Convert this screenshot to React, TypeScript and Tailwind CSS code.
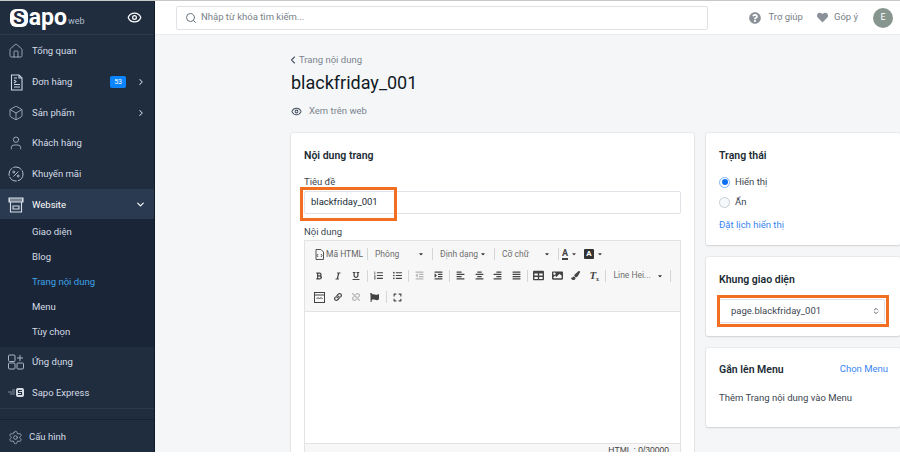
import type { ReactNode } from 'react';
import {
  Box,
  ChevronDown,
  ChevronLeft,
  ChevronRight,
  ChevronsUpDown,
  Eye,
  Home,
  Search,
  Settings,
  User,
} from 'lucide-react';
import {
  FaAlignCenter,
  FaAlignJustify,
  FaAlignLeft,
  FaAlignRight,
  FaBold,
  FaCaretDown,
  FaExpand,
  FaFlag,
  FaHeart,
  FaImage,
  FaIndent,
  FaItalic,
  FaLink,
  FaListOl,
  FaListUl,
  FaOutdent,
  FaPaintBrush,
  FaQuestionCircle,
  FaTable,
  FaUnderline,
  FaUnlink,
} from 'react-icons/fa';

function OrderIcon() {
  return (
    <svg width="15" height="17" viewBox="0 0 15 17" fill="none" stroke="#cbd5e1" strokeWidth="1.1">
      <path d="M2.500 1h7.500l3 3v12h-10.500z" />
      <path d="M10 1v3h3M5 4h3M5 13h6M5 10.500h6M5 6l2 1.500-2 1.500" />
    </svg>
  );
}

function PercentIcon() {
  return (
    <svg width="16" height="16" viewBox="0 0 16 16" fill="none" stroke="#b3bfcc" strokeWidth="1">
      <circle cx="8" cy="8" r="7" strokeDasharray="9 1" />
      <path d="M5.500 10.500l5-5" />
      <circle cx="5.800" cy="6" r="1" />
      <circle cx="10.200" cy="10" r="1" />
    </svg>
  );
}

function WebsiteIcon() {
  return (
    <svg width="16" height="16" viewBox="0 0 16 16" fill="none" stroke="#d7dee6" strokeWidth="1.100">
      <path d="M1 1h14v4H1z" fill="#d7dee6" />
      <path d="M3 1.500v3M5 1.500v3M7 1.500v3M9 1.500v3M11 1.500v3M13 1.500v3" stroke="#27384d" />
      <path d="M2.500 5v10h11V5M5 9h6v3H5z" />
    </svg>
  );
}

function AppsIcon() {
  return (
    <svg width="16" height="16" viewBox="0 0 16 16" fill="none" stroke="#a9b6c4" strokeWidth="1">
      <rect x="0.500" y="1" width="6.500" height="6.500" rx="1" />
      <rect x="0.500" y="9" width="6.500" height="6" rx="1" />
      <rect x="9" y="9" width="6.500" height="6" rx="1" />
      <path d="M12 1v6M9 4h6" />
    </svg>
  );
}

function ExpressIcon() {
  return (
    <svg width="16" height="11" viewBox="0 0 16 11" fill="none">
      <path d="M0 5h7M2 7h5M4 3h3" stroke="#7f8c9b" />
      <rect x="8" y="1" width="8" height="9" rx="2" fill="#d7dee6" />
      <path d="M14 3.500h-3.500v2h3v2H10" stroke="#1f2d3f" strokeWidth="1.100" />
    </svg>
  );
}

function NavItem({
  icon,
  label,
  badge,
  arrow,
  active,
}: {
  icon: ReactNode;
  label: string;
  badge?: string;
  arrow?: 'right' | 'down';
  active?: boolean;
}) {
  return (
    <div className={`flex h-[30.7px] items-center pl-2 pr-[8px] ${active ? 'bg-[#2a3b51] text-white' : 'text-[#d5dce4]'}`}>
      <span className="flex w-[16px] shrink-0 justify-center">{icon}</span>
      <span className="ml-[8px] flex-1 text-[9.500px]">{label}</span>
      {badge && (
        <span className="mr-[10px] rounded-[2px] bg-[#0a84ff] px-[4px] py-px text-[7px] leading-[10px] text-white">{badge}</span>
      )}
      {arrow === 'right' && <ChevronRight size={10} strokeWidth={2.500} className="text-[#cbd5e1]" />}
      {arrow === 'down' && <ChevronDown size={11} strokeWidth={2.500} className="text-white" />}
    </div>
  );
}

function Sidebar() {
  const iconClass = 'text-[#b3bfcc]';
  return (
    <aside className="flex w-[155px] shrink-0 flex-col border-r border-[#101b2a] bg-[#1f2d3f]">
      <div className="flex h-[34px] shrink-0 items-center justify-between border-b border-[#2a3a4d] pl-[10px] pr-[12px]">
        <div className="flex items-end text-white">
          <span className="rounded-[6px] bg-white px-[3px] text-[19px] font-bold leading-[18px] text-[#1f2d3f]">S</span>
          <span className="ml-px text-[23px] font-bold leading-[18px]">apo</span>
          <span className="ml-px text-[9px] leading-[12px] text-[#b3bfcc]">web</span>
        </div>
        <Eye size={15} strokeWidth={2} className="text-white" />
      </div>
      <div className="pt-px">
        <NavItem icon={<Home size={16} strokeWidth={1.200} className={iconClass} />} label="Tổng quan" />
        <NavItem icon={<OrderIcon />} label="Đơn hàng" badge="53" arrow="right" />
        <NavItem icon={<Box size={16} strokeWidth={1.200} className={iconClass} />} label="Sản phẩm" arrow="right" />
        <NavItem icon={<User size={16} strokeWidth={1.200} className={iconClass} />} label="Khách hàng" />
        <NavItem icon={<PercentIcon />} label="Khuyến mãi" />
        <NavItem icon={<WebsiteIcon />} label="Website" arrow="down" active />
      </div>
      <div className="-mt-px flex flex-col bg-[#1a2638] pb-[3px] text-[9.500px] text-[#d5dce4]">
        {['Giao diện', 'Blog', 'Trang nội dung', 'Menu', 'Tùy chọn'].map((item) => (
          <div key={item} className={`flex h-[25px] items-center pl-[32px] ${item === 'Trang nội dung' ? 'text-[#3fa3e8]' : ''}`}>
            {item}
          </div>
        ))}
      </div>
      <NavItem icon={<AppsIcon />} label="Ứng dụng" />
      <NavItem icon={<ExpressIcon />} label="Sapo Express" />
      <div className="mt-auto h-[11px] border-t border-[#2a3a4d]" />
      <div className="flex h-[33px] items-center border-t border-[#17222f] pl-[8px] pt-[3px] text-[9.500px] text-[#d5dce4]">
        <Settings size={15} strokeWidth={1.200} className={iconClass} />
        <span className="ml-[6px]">Cấu hình</span>
      </div>
    </aside>
  );
}

function Header() {
  return (
    <header className="flex h-[34px] shrink-0 items-center border-b border-[#e8ebef] bg-white pl-[21px] pr-[7px] text-[#777f88]">
      <div className="flex h-[24px] w-[532px] items-center rounded-[2px] border border-[#dfe3e8] pl-[8px] text-[9.500px]">
        <Search size={12} strokeWidth={2} className="text-[#666f79]" />
        <span className="ml-[4px]">Nhập từ khóa tìm kiếm...</span>
      </div>
      <div className="ml-auto flex items-center text-[9.500px]">
        <FaQuestionCircle size={12} className="text-[#8a9199]" />
        <span className="ml-[7px]">Trợ giúp</span>
        <FaHeart size={11} className="ml-[14px] text-[#8a9199]" />
        <span className="ml-[6px]">Góp ý</span>
        <span className="ml-[15px] flex size-[20px] items-center justify-center rounded-full bg-[#87958f] text-[9px] text-white">E</span>
      </div>
    </header>
  );
}

function ToolSep() {
  return <span className="mx-[1.500px] h-[12px] w-px shrink-0 bg-[#d5d5d5]" />;
}

function ToolSelect({ label, width }: { label: string; width: string }) {
  return (
    <span className={`flex items-center justify-between pl-[6px] pr-[6px] text-[8.500px] text-[#6f6f6f] ${width}`}>
      {label}
      <FaCaretDown size={6} className="text-[#333]" />
    </span>
  );
}

function Tool({ children, muted }: { children: ReactNode; muted?: boolean }) {
  return (
    <span className={`flex h-[14px] w-[18.500px] items-center justify-center ${muted ? 'text-[#b5b5b5]' : 'text-[#444]'}`}>
      {children}
    </span>
  );
}

function Editor() {
  return (
    <div className="border border-[#e3e3e3]">
      <div className="flex h-[71px] flex-col gap-[7.500px] border-b border-[#e3e3e3] bg-[#f7f7f7] pl-[5px] pt-[6px]">
        <div className="flex h-[14px] items-center">
          <span className="ml-[5px] flex w-[50px] items-center gap-[2px] whitespace-nowrap text-[8.500px] text-[#666]">
            <svg width="9" height="11" viewBox="0 0 9 11" fill="none" stroke="#555">
              <path d="M1 .5h5l2.500 2.500v7.500H1z" />
              <path d="M3 5l-1 1.500 1 1.500M6 5l1 1.500-1 1.500" />
            </svg>
            Mã HTML
          </span>
          <ToolSep />
          <ToolSelect label="Phông" width="w-[61px]" />
          <ToolSep />
          <ToolSelect label="Định dạng" width="w-[58px]" />
          <ToolSep />
          <ToolSelect label="Cỡ chữ" width="w-[60px]" />
          <ToolSep />
          <span className="ml-[2px] flex items-center gap-[3px] text-[#444]">
            <span className="border-b-2 border-[#444] text-[9px] font-bold leading-[10px]">A</span>
            <FaCaretDown size={6} />
            <span className="ml-[4px] flex size-[10px] items-center justify-center rounded-[1px] bg-[#333] text-[8px] font-bold text-white">A</span>
            <FaCaretDown size={6} />
          </span>
        </div>
        <div className="flex h-[14px] items-center">
          <Tool><FaBold size={8} /></Tool>
          <Tool><FaItalic size={8} /></Tool>
          <Tool><FaUnderline size={8} /></Tool>
          <ToolSep />
          <Tool><FaListOl size={9} /></Tool>
          <Tool><FaListUl size={9} /></Tool>
          <ToolSep />
          <Tool muted><FaOutdent size={9} /></Tool>
          <Tool><FaIndent size={9} /></Tool>
          <ToolSep />
          <Tool><FaAlignLeft size={9} /></Tool>
          <Tool><FaAlignCenter size={9} /></Tool>
          <Tool><FaAlignRight size={9} /></Tool>
          <Tool><FaAlignJustify size={9} /></Tool>
          <ToolSep />
          <Tool><FaTable size={11} /></Tool>
          <Tool><FaImage size={11} /></Tool>
          <Tool><FaPaintBrush size={9} /></Tool>
          <Tool>
            <span className="font-['Liberation_Serif',serif] text-[11px] font-bold italic leading-none">
              T<sub className="text-[6px] not-italic">x</sub>
            </span>
          </Tool>
          <ToolSep />
          <ToolSelect label="Line Hei..." width="w-[61px]" />
          <ToolSep />
        </div>
        <div className="flex h-[14px] items-center">
          <Tool>
            <svg width="11" height="11" viewBox="0 0 11 11" fill="none" stroke="#444">
              <rect x=".5" y=".5" width="10" height="10" />
              <path d="M1 3h9M2.500 7l1.500-1.500L5.500 7 7 5.500 8.500 7" />
            </svg>
          </Tool>
          <Tool><FaLink size={8} /></Tool>
          <Tool muted><FaUnlink size={8} /></Tool>
          <Tool><FaFlag size={9} /></Tool>
          <ToolSep />
          <Tool><FaExpand size={9} /></Tool>
        </div>
      </div>
      <div className="h-[131px] bg-white" />
      <div className="flex h-[20px] justify-end border-t border-[#e3e3e3] bg-[#f7f7f7] pr-[11px] font-['Liberation_Sans',sans-serif] text-[8.500px] leading-[13px] text-[#444]">
        HTML : 0/30000
      </div>
    </div>
  );
}

function Card({ className, children }: { className: string; children: ReactNode }) {
  return <section className={`rounded-[2px] bg-white shadow-[0_0_0_1px_rgba(63,63,68,0.05),0_1px_2px_rgba(63,63,68,0.15)] ${className}`}>{children}</section>;
}

function Content() {
  return (
    <div className="flex min-h-0 flex-1 flex-col overflow-hidden bg-[#f4f6f8] pl-[136px] text-[#3c4650]">
      <div className="mt-[19px] flex h-[12px] items-center text-[9.500px] text-[#7b848d]">
        <ChevronLeft size={12} strokeWidth={2.200} className="-ml-[4px] text-[#4b5560]" />
        <span>Trang nội dung</span>
      </div>
      <h1 className="mt-[3px] h-[28px] text-[18px] font-normal leading-[28px] text-[#111a24]">blackfriday_001</h1>
      <div className="mt-[7px] flex h-[14px] items-center text-[9.500px] text-[#7b848d]">
        <Eye size={11} strokeWidth={2.200} className="text-[#4b5560]" />
        <span className="ml-[7px]">Xem trên web</span>
      </div>
      <div className="mt-[15px] flex items-start">
        <Card className="h-[340px] w-[403px] shrink-0 px-[13px] pt-[16px]">
          <h2 className="h-[13px] text-[10.500px] font-semibold leading-[13px] text-[#212b35]">Nội dung trang</h2>
          <label className="mt-[13px] block h-[13px] text-[9.500px] leading-[13px]">Tiêu đề</label>
          <div className="mt-[3px] flex h-[23px] w-[377px] items-center rounded-[2px] border border-[#dfe3e8] pl-[6px] text-[9.500px] text-[#212b35]">
            blackfriday_001
          </div>
          <label className="mt-[11px] block h-[13px] text-[9.500px] leading-[13px]">Nội dung</label>
          <div className="mt-[2px] w-[377px]">
            <Editor />
          </div>
        </Card>
        <div className="ml-[12px] flex w-[194px] shrink-0 flex-col gap-[12px]">
          <Card className="h-[112px] pl-[13px] pt-[16px]">
            <h2 className="h-[13px] text-[10.500px] font-semibold leading-[13px] text-[#212b35]">Trạng thái</h2>
            <div className="mt-[13px] flex h-[14px] items-center text-[9.500px]">
              <span className="flex size-[11px] items-center justify-center rounded-full border border-[#7db6f5] bg-white">
                <span className="size-[6px] rounded-full bg-[#0a6ff0]" />
              </span>
              <span className="ml-[5px]">Hiển thị</span>
            </div>
            <div className="mt-[6px] flex h-[14px] items-center text-[9.500px]">
              <span className="size-[11px] rounded-full border border-[#c4cdd5] bg-[#f7f8f9]" />
              <span className="ml-[5px]">Ẩn</span>
            </div>
            <div className="mt-[9px] h-[14px] text-[9.500px] leading-[14px] text-[#3a86f0]">Đặt lịch hiển thị</div>
          </Card>
          <Card className="h-[79px] pl-[13px] pt-[16px]">
            <h2 className="h-[13px] text-[10.500px] font-semibold leading-[13px] text-[#212b35]">Khung giao diện</h2>
            <div className="mt-[13px] flex h-[24px] w-[166px] items-center justify-between rounded-[2px] border border-[#dfe3e8] pl-[11px] pr-[4px] text-[9.500px]">
              page.blackfriday_001
              <ChevronsUpDown size={8} strokeWidth={2.500} />
            </div>
          </Card>
          <Card className="h-[79px] pl-[13px] pt-[15px]">
            <div className="flex w-[169px] items-start justify-between">
              <h2 className="h-[13px] text-[10.500px] font-semibold leading-[13px] text-[#212b35]">Gắn lên Menu</h2>
              <span className="-mt-[1px] text-[9.500px] leading-[13px] text-[#3a86f0]">Chọn Menu</span>
            </div>
            <p className="mt-[15px] text-[9.500px] leading-[13px]">Thêm Trang nội dung vào Menu</p>
          </Card>
        </div>
      </div>
    </div>
  );
}

export default function App() {
  return (
    <div className="relative flex h-[457px] w-[900px] flex-col overflow-hidden bg-white font-['Roboto',sans-serif]">
      <div className="h-px shrink-0 bg-[#c8c8c8]" />
      <div className="flex h-[451px] shrink-0">
        <Sidebar />
        <main className="flex min-w-0 flex-1 flex-col">
          <Header />
          <Content />
        </main>
      </div>
      <div className="absolute left-[300px] top-[187px] h-[34px] w-[97px] border-[3px] border-[#f26f21]" />
      <div className="absolute left-[717px] top-[295px] h-[32px] w-[172px] border-[3px] border-[#f26f21]" />
    </div>
  );
}
